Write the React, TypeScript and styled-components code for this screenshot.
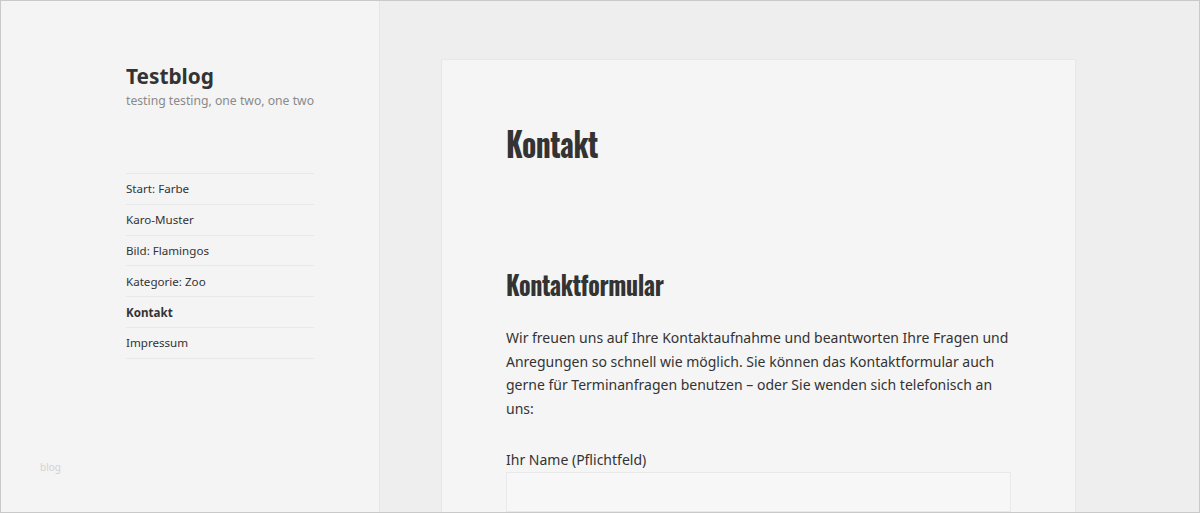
import React from 'react';
import styled, { createGlobalStyle } from 'styled-components';

const GlobalStyle = createGlobalStyle`
  html, body {
    margin: 0;
    padding: 0;
    background: #eeeeee;
  }
  body {
    font-family: "Noto Sans", "Open Sans", sans-serif;
    color: #333333;
  }
  * {
    box-sizing: border-box;
  }
`;

const navItems = [
  { label: 'Start: Farbe' },
  { label: 'Karo-Muster' },
  { label: 'Bild: Flamingos' },
  { label: 'Kategorie: Zoo' },
  { label: 'Kontakt', current: true },
  { label: 'Impressum' },
];

const App: React.FC = () => {
  return (
    <>
      <GlobalStyle />
      <Frame>
        <Sidebar>
          <Branding>
            <SiteTitle>Testblog</SiteTitle>
            <Tagline>testing testing, one two, one two</Tagline>
          </Branding>
          <Nav>
            {navItems.map((item) => (
              <NavItem key={item.label} $current={item.current}>
                {item.label}
              </NavItem>
            ))}
          </Nav>
          <Footnote>blog</Footnote>
        </Sidebar>
        <Main>
          <Card>
            <PageTitle>Kontakt</PageTitle>
            <SectionTitle>Kontaktformular</SectionTitle>
            <Paragraph>
              Wir freuen uns auf Ihre Kontaktaufnahme und beantworten Ihre Fragen und Anregungen so
              schnell wie möglich. Sie können das Kontaktformular auch gerne für Terminanfragen
              benutzen – oder Sie wenden sich telefonisch an uns:
            </Paragraph>
            <FieldLabel>Ihr Name (Pflichtfeld)</FieldLabel>
            <TextInput type="text" />
          </Card>
        </Main>
      </Frame>
    </>
  );
};

export default App;

const Frame = styled.div`
  display: flex;
  width: 1200px;
  height: 513px;
  overflow: hidden;
  border: 1px solid #c9c9c9;
  background: #eeeeee;
`;

const Sidebar = styled.aside`
  position: relative;
  flex: 0 0 379px;
  display: flex;
  flex-direction: column;
  padding: 61px 60px 0 125px;
  background: #f4f4f4;
  border-right: 1px solid #e6e6e6;
`;

const Branding = styled.div`
  display: flex;
  flex-direction: column;
`;

const SiteTitle = styled.div`
  font-size: 20.8px;
  font-weight: 700;
  line-height: 28px;
  color: #333333;
`;

const Tagline = styled.div`
  margin-top: 1px;
  font-size: 12.2px;
  line-height: 20px;
  white-space: nowrap;
  color: #8a8a8a;
`;

const Nav = styled.nav`
  display: flex;
  flex-direction: column;
  width: 188px;
  margin-top: 62px;
  border-top: 1px solid #e8e8e8;
`;

const NavItem = styled.div<{ $current?: boolean }>`
  height: 30.8px;
  display: flex;
  align-items: center;
  font-size: 11.6px;
  font-weight: ${(p) => (p.$current ? 700 : 400)};
  color: #333333;
  border-bottom: 1px solid #e8e8e8;
`;

const Footnote = styled.div`
  position: absolute;
  left: 39px;
  top: 459px;
  font-size: 10px;
  color: #d2d2d2;
`;

const Main = styled.main`
  flex: 1;
  padding: 59px 124px 0 62px;
`;

const Card = styled.article`
  display: flex;
  flex-direction: column;
  min-height: 480px;
  padding: 60px 64px 0 64px;
  background: #f5f5f5;
  box-shadow: 0 0 1px rgba(0, 0, 0, 0.18);
`;

const PageTitle = styled.h1`
  margin: 0;
  font-family: "Oswald", "Liberation Sans Narrow", "DejaVu Sans Condensed", "Liberation Sans", sans-serif;
  font-stretch: condensed;
  font-size: 34px;
  line-height: 46px;
  font-weight: 700;
  letter-spacing: -0.5px;
  color: #333333;
  transform: scaleX(0.87);
  transform-origin: left center;
`;

const SectionTitle = styled.h2`
  margin: 98px 0 0;
  font-family: "Oswald", "Liberation Sans Narrow", "DejaVu Sans Condensed", "Liberation Sans", sans-serif;
  font-stretch: condensed;
  font-size: 27px;
  line-height: 40px;
  font-weight: 700;
  letter-spacing: -0.4px;
  color: #333333;
  transform: scaleX(0.89);
  transform-origin: left center;
`;

const Paragraph = styled.p`
  margin: 22px 0 0;
  font-size: 14px;
  line-height: 23.7px;
  color: #333333;
`;

const FieldLabel = styled.label`
  margin-top: 27px;
  font-size: 14px;
  line-height: 24px;
  color: #333333;
`;

const TextInput = styled.input`
  margin-top: 0;
  width: 100%;
  height: 40px;
  border: 1px solid #e9e9e9;
  background: #f7f7f7;
  outline: none;
`;
